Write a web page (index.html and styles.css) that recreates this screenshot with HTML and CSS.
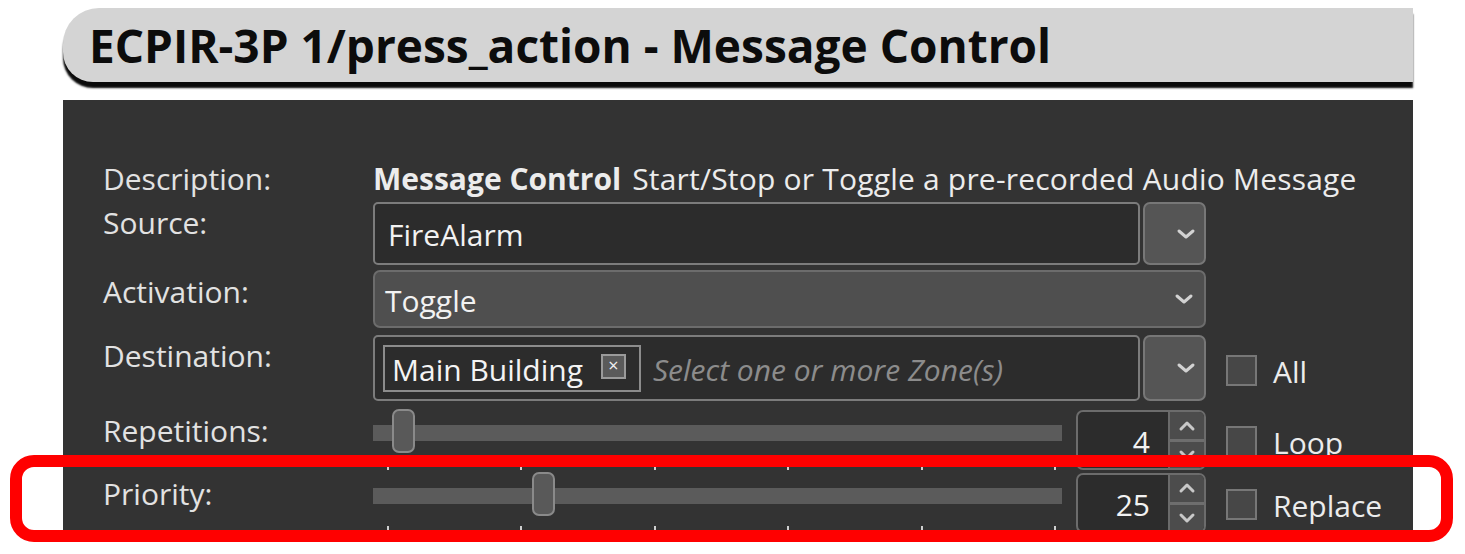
FILE: index.html
```html
<!DOCTYPE html>
<html>
<head>
<meta charset="utf-8">
<link rel="stylesheet" href="styles.css">
</head>
<body>
<div class="page">
  <div class="window">
    <div class="titlebar"><h1>ECPIR-3P 1/press_action - Message Control</h1></div>
    <div class="panel">
      <div class="row row-desc">
        <div class="label">Description:</div>
        <div class="desc"><b>Message Control</b> Start/Stop or Toggle a pre-recorded Audio Message</div>
      </div>
      <div class="row row-source">
        <div class="label">Source:</div>
        <div class="ctrl">
          <div class="combo combo-dark"><span class="value">FireAlarm</span></div>
          <div class="dd-btn"><svg class="chev" viewBox="0 0 20 12"><polyline points="3,3 10,9 17,3"/></svg></div>
        </div>
      </div>
      <div class="row row-activation">
        <div class="label">Activation:</div>
        <div class="ctrl">
          <div class="combo combo-light"><span class="value">Toggle</span><svg class="chev" viewBox="0 0 20 12"><polyline points="3,3 10,9 17,3"/></svg></div>
        </div>
      </div>
      <div class="row row-dest">
        <div class="label">Destination:</div>
        <div class="ctrl">
          <div class="combo combo-dark combo-tags">
            <span class="chip"><span class="chip-text">Main Building</span><span class="chip-x">×</span></span>
            <span class="placeholder">Select one or more Zone(s)</span>
          </div>
          <div class="dd-btn"><svg class="chev" viewBox="0 0 20 12"><polyline points="3,3 10,9 17,3"/></svg></div>
          <label class="check"><span class="box"></span><span class="check-text">All</span></label>
        </div>
      </div>
      <div class="row row-slider">
        <div class="label">Repetitions:</div>
        <div class="ctrl">
          <div class="slider">
            <div class="track"></div>
            <div class="thumb" style="left: 19px"></div>
            <div class="ticks"><i></i><i></i><i></i><i></i><i></i><i></i></div>
          </div>
          <div class="spin">
            <div class="spin-field">4</div>
            <div class="spin-btns">
              <div class="spin-btn"><svg viewBox="0 0 20 12"><polyline points="4,9 10,3 16,9"/></svg></div>
              <div class="spin-btn"><svg viewBox="0 0 20 12"><polyline points="4,3 10,9 16,3"/></svg></div>
            </div>
          </div>
          <label class="check"><span class="box"></span><span class="check-text">Loop</span></label>
        </div>
      </div>
      <div class="row row-slider">
        <div class="label">Priority:</div>
        <div class="ctrl">
          <div class="slider">
            <div class="track"></div>
            <div class="thumb" style="left: 159px"></div>
            <div class="ticks"><i></i><i></i><i></i><i></i><i></i><i></i></div>
          </div>
          <div class="spin">
            <div class="spin-field">25</div>
            <div class="spin-btns">
              <div class="spin-btn"><svg viewBox="0 0 20 12"><polyline points="4,9 10,3 16,9"/></svg></div>
              <div class="spin-btn"><svg viewBox="0 0 20 12"><polyline points="4,3 10,9 16,3"/></svg></div>
            </div>
          </div>
          <label class="check"><span class="box"></span><span class="check-text">Replace</span></label>
        </div>
      </div>
    </div>
  </div>
  <div class="highlight"></div>
</div>
</body>
</html>
```

FILE: styles.css
```css
* { box-sizing: border-box; }

html, body {
  margin: 0;
  padding: 0;
  background: #ffffff;
  width: 1465px;
  height: 554px;
  overflow: hidden;
  font-family: "Open Sans", "Noto Sans", sans-serif;
}

.page {
  position: relative;
  width: 1465px;
  height: 554px;
}

.window {
  margin-left: 63px;
  width: 1350px;
  padding-top: 8px;
}

.titlebar {
  height: 74px;
  background: #d4d4d4;
  border-radius: 36px 0 0 30px;
  box-shadow: 0 6px 2px #0a0a0a;
  display: flex;
  align-items: center;
  padding-left: 26px;
}

.titlebar h1 {
  margin: 0;
  font-size: 46px;
  font-weight: 700;
  color: #0c0c0c;
  letter-spacing: 0;
  line-height: 1;
}

.panel {
  margin-top: 18px;
  height: 436px;
  background: #333333;
  padding: 58px 0 0 40px;
  display: flex;
  flex-direction: column;
  color: #e4e4e4;
  font-size: 30px;
}

.row {
  display: flex;
  align-items: flex-start;
}

.label {
  width: 270px;
  flex: none;
  line-height: 32px;
  padding-top: 5px;
  color: #e2e2e2;
  white-space: nowrap;
}

.ctrl {
  display: flex;
  align-items: flex-start;
}

.row-desc { height: 44px; }
.row-desc .desc {
  line-height: 32px;
  padding-top: 5px;
  color: #ececec;
  white-space: nowrap;
  letter-spacing: 0.2px;
}
.row-desc .desc b { font-weight: 700; margin-right: 3px; letter-spacing: 0; }

.row-source { margin-top: 3px; height: 63px; }
.row-activation { margin-top: 5px; height: 58px; }
.row-dest { margin-top: 7px; height: 66px; }
.row-slider { height: 67px; }
.row-dest + .row-slider { margin-top: 9px; }

.row-source .label { padding-top: 5px; }
.row-activation .label { padding-top: 6px; }
.row-dest .label { padding-top: 5px; }
.row-slider .label { padding-top: 5px; }

.combo {
  display: flex;
  align-items: center;
  border-radius: 5px;
  padding-left: 13px;
  color: #f2f2f2;
}

.combo-dark {
  width: 767px;
  background: #2c2c2c;
  border: 2px solid #7c7c7c;
}
.row-source .combo-dark { height: 63px; }

.combo-light {
  width: 833px;
  height: 58px;
  background: #4f4f4f;
  border: 2px solid #6c6c6c;
  border-radius: 7px;
  padding-left: 10px;
  justify-content: space-between;
  padding-right: 10px;
}

.value { line-height: 32px; padding-top: 3px; white-space: nowrap; }

.chev {
  width: 20px;
  height: 12px;
  fill: none;
  stroke: #d2d2d2;
  stroke-width: 3;
  stroke-linecap: round;
  stroke-linejoin: round;
}

.dd-btn {
  margin-left: 3px;
  width: 63px;
  background: #555555;
  border: 2px solid #777777;
  border-radius: 7px;
  display: flex;
  align-items: center;
  justify-content: center;
  padding-left: 22px;
}
.row-source .dd-btn { height: 63px; }
.row-dest .dd-btn { height: 66px; }

.combo-tags {
  height: 66px;
  padding-left: 8px;
  gap: 12px;
}

.chip {
  display: flex;
  align-items: center;
  height: 47px;
  border: 2px solid #8c8c8c;
  padding: 0 13px 0 7px;
  gap: 18px;
  color: #f4f4f4;
  white-space: nowrap;
}
.chip-text { line-height: 32px; padding-top: 3px; }
.chip-x {
  width: 25px;
  height: 25px;
  background: #5a5a5a;
  border: 2px solid #9a9a9a;
  color: #f0f0f0;
  font-size: 18px;
  line-height: 19px;
  text-align: center;
  margin-bottom: 4px;
}

.placeholder {
  font-style: italic;
  color: #8c8c8c;
  line-height: 32px;
  padding-top: 3px;
  white-space: nowrap;
}

.check {
  display: flex;
  align-items: center;
  margin-left: 20px;
  gap: 16px;
}
.row-dest .check { margin-top: 18px; }
.row-slider .check { margin-top: 14px; }

.box {
  width: 31px;
  height: 31px;
  background: #474747;
  border: 2px solid #777777;
}
.check-text {
  line-height: 32px;
  color: #ececec;
  padding-top: 3px;
}

.slider {
  position: relative;
  width: 689px;
  height: 60px;
}
.track {
  margin-top: 15px;
  height: 16px;
  background: #5b5b5b;
}
.thumb {
  position: absolute;
  top: -1px;
  width: 23px;
  height: 44px;
  background: #595959;
  border: 2px solid #8a8a8a;
  border-radius: 7px;
}
.ticks {
  margin: 22px 0 0 14px;
  width: 669px;
  display: flex;
  justify-content: space-between;
}
.ticks i {
  display: block;
  width: 2px;
  height: 7px;
  background: #d0d0d0;
}

.spin {
  margin-left: 14px;
  width: 130px;
  height: 60px;
  display: flex;
  border: 2px solid #6c6c6c;
  border-radius: 7px;
  background: #2c2c2c;
}
.spin-field {
  flex: 1;
  text-align: right;
  padding-right: 18px;
  line-height: 32px;
  padding-top: 14px;
  color: #f2f2f2;
}
.spin-btns {
  width: 36px;
  display: flex;
  flex-direction: column;
  background: #4c4c4c;
  border-left: 2px solid #6a6a6a;
  border-radius: 0 5px 5px 0;
}
.spin-btn {
  flex: 1;
  display: flex;
  align-items: center;
  justify-content: center;
}
.spin-btn + .spin-btn { border-top: 3px solid #6e6e6e; }
.spin-btn svg {
  width: 20px;
  height: 12px;
  fill: none;
  stroke: #c8c8c8;
  stroke-width: 3;
  stroke-linecap: round;
  stroke-linejoin: round;
}

.highlight {
  position: absolute;
  left: 10px;
  top: 455px;
  width: 1443px;
  height: 87px;
  border: 12px solid #ff0000;
  border-radius: 24px;
}
```
